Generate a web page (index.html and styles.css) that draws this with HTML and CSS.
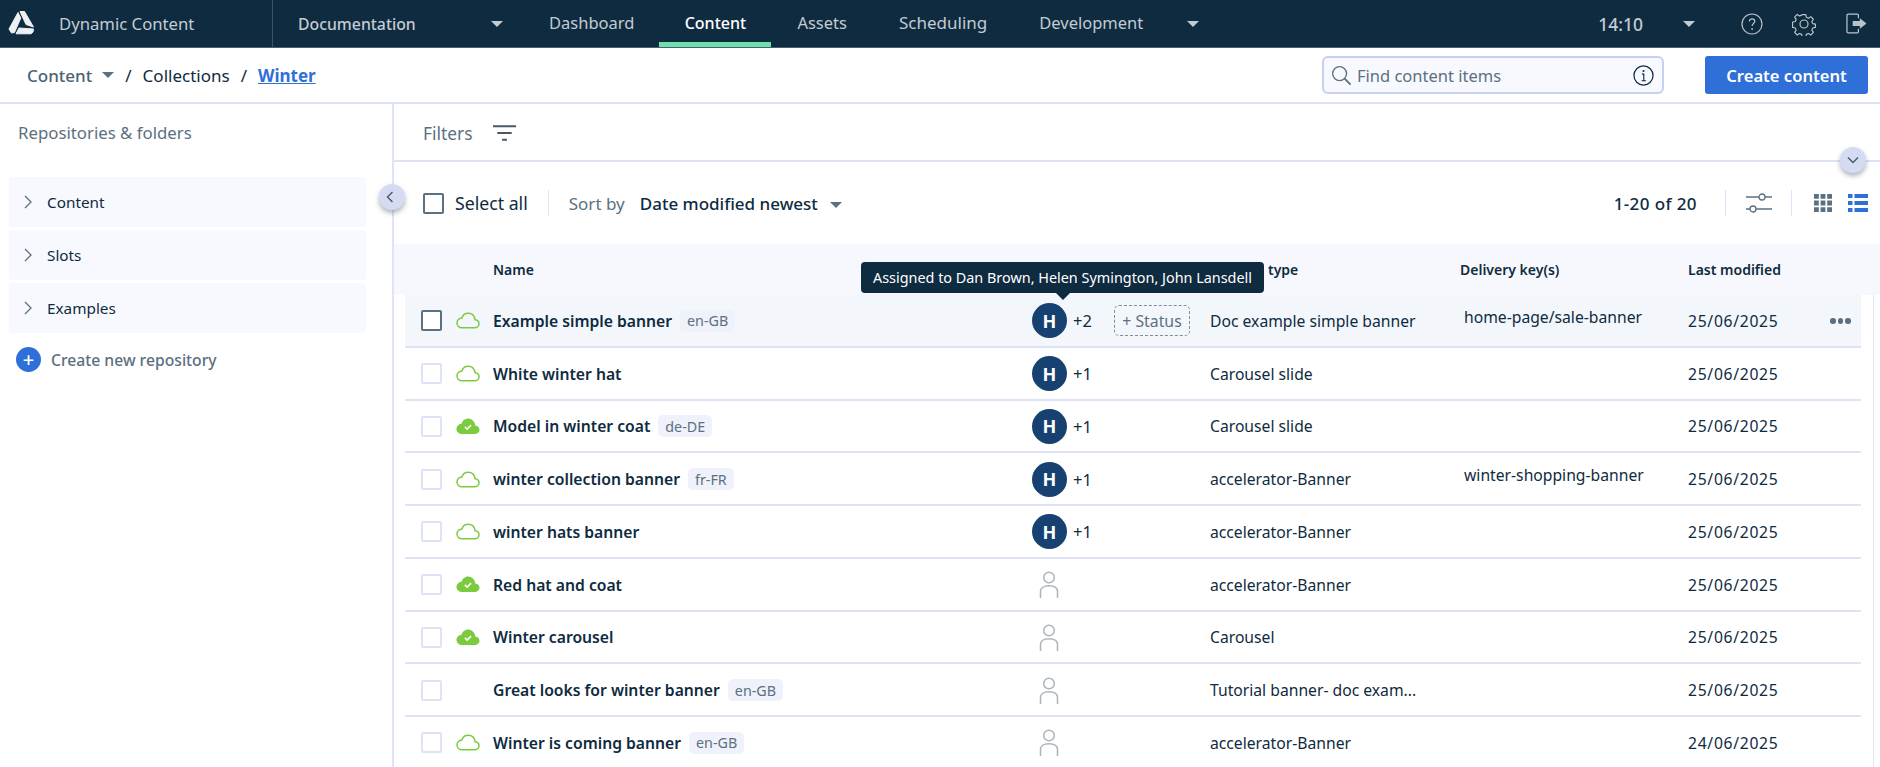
FILE: index.html
```html
<!DOCTYPE html>
<html lang="en">
<head>
<meta charset="utf-8">
<title>Dynamic Content</title>
<link rel="stylesheet" href="styles.css">
</head>
<body>
<svg class="sprite" aria-hidden="true">
  <symbol id="cloud" viewBox="0 0 24 17"><path d="M6 15.800h12.600c2.400 0 4.400-1.700 4.400-4 0-2.200-1.700-3.800-3.900-4C18.500 3.900 15.800 1.200 12.300 1.200 9.200 1.200 6.700 3.300 5.900 6 3.100 6.200 1 8.400 1 11c0 2.700 2.200 4.800 5 4.800z" fill="none" stroke="#7ccb3f" stroke-width="1.500"/></symbol>
  <symbol id="cloud-ok" viewBox="0 0 24 17"><path d="M6 16h12.600c2.500 0 4.900-1.700 4.900-4.200 0-2.300-1.900-4-4.100-4.200C18.700 3.500 15.800.5 12.300.5 9 .5 6.300 2.800 5.500 5.700 2.700 6 .5 8.300.5 11c0 2.800 2.400 5 5.500 5z" fill="#7ccb3f"/><path d="M8.800 8.800l2.300 2.300 4-4" fill="none" stroke="#fff" stroke-width="1.500"/></symbol>
  <symbol id="person" viewBox="0 0 20 28"><circle cx="10" cy="6.500" r="5.300" fill="none" stroke="#a9b5bd" stroke-width="1.500"/><path d="M1.500 27v-6.500c0-3.600 3-5.800 8.500-5.800s8.500 2.200 8.500 5.800V27" fill="none" stroke="#a9b5bd" stroke-width="1.500"/></symbol>
</svg>

<header class="topbar">
  <div class="brand">
    <svg class="logo" viewBox="0 0 26 24"><g fill="#eef1f3" stroke="#eef1f3" stroke-width="1" stroke-linejoin="round"><path d="M10 1.500L12.800 7 6.500 21.500 3.500 22 1 18z"/><path d="M12 .5h4.500L25.500 16 18 13.500z"/><path d="M8 22.800L11 17l14.500 1-.5 3-2 1.800z"/></g></svg>
    <span>Dynamic Content</span>
  </div>
  <div class="hub"><span>Documentation</span><i class="caret caret-light"></i></div>
  <nav class="tabs">
    <a class="tab">Dashboard</a>
    <a class="tab tab-active">Content</a>
    <a class="tab">Assets</a>
    <a class="tab tab-wide">Scheduling</a>
    <a class="tab">Development</a>
    <i class="caret caret-light"></i>
  </nav>
  <div class="top-right">
    <span class="clock">14:10</span>
    <i class="caret caret-light"></i>
    <svg class="top-icon icon-help" viewBox="0 0 22 22"><circle cx="11" cy="11" r="10" fill="none" stroke="#b9c3ca" stroke-width="1.200"/><path d="M8.400 8.500c0-1.600 1.200-2.700 2.700-2.700s2.700 1 2.700 2.500c0 2.200-2.700 2.300-2.700 4.600" fill="none" stroke="#b9c3ca" stroke-width="1.200"/><circle cx="11.100" cy="16" r=".9" fill="#b9c3ca"/></svg>
    <svg class="top-icon icon-gear" viewBox="0 0 24 24"><path d="M10 1.500h4l.6 3 2.400 1 2.600-1.700 2.800 2.900-1.700 2.500 1 2.400 3 .6v3.600l-3 .6-1 2.400 1.700 2.500-2.800 2.900-2.600-1.700-2.400 1-.6 3h-4l-.6-3-2.400-1-2.600 1.700-2.800-2.900 1.700-2.500-1-2.400-3-.6V9.800l3-.6 1-2.400-1.700-2.500 2.800-2.900L7 3.100l2.400-1z" transform="translate(1.200 1.200) scale(.9)" fill="none" stroke="#b9c3ca" stroke-width="1.300" stroke-linejoin="round"/><circle cx="12" cy="12" r="4" fill="none" stroke="#b9c3ca" stroke-width="1.200"/></svg>
    <svg class="top-icon icon-exit" viewBox="0 0 22 22"><path d="M13 5.500V2.500c0-.8-.6-1.300-1.300-1.300H2.300C1.600 1.200 1 1.700 1 2.500v17c0 .8.600 1.300 1.300 1.300h9.400c.7 0 1.300-.5 1.300-1.300v-3" fill="none" stroke="#b9c3ca" stroke-width="1.300"/><path d="M7 8.500h7.500V5.500l7 5.500-7 5.500v-3H7z" fill="#b9c3ca"/></svg>
  </div>
</header>

<div class="subbar">
  <div class="crumbs">
    <span class="crumb-muted">Content</span>
    <i class="caret caret-grey"></i>
    <span class="slash">/</span>
    <span>Collections</span>
    <span class="slash">/</span>
    <a class="crumb-link">Winter</a>
  </div>
  <div class="actions">
    <div class="search">
      <svg class="search-icon" viewBox="0 0 22 22"><circle cx="9" cy="9" r="7.300" fill="none" stroke="#5b7080" stroke-width="1.400"/><path d="M14.300 14.300l6.200 6.200" stroke="#5b7080" stroke-width="2"/></svg>
      <span class="search-text">Find content items</span>
      <svg class="info-icon" viewBox="0 0 22 22"><circle cx="11" cy="11" r="10" fill="none" stroke="#0f2b40" stroke-width="1.300"/><circle cx="11" cy="6.300" r="1.100" fill="#0f2b40"/><path d="M9.300 9.500h2v7M9 16.500h4.500" fill="none" stroke="#0f2b40" stroke-width="1.200"/></svg>
    </div>
    <button class="create">Create content</button>
  </div>
</div>

<div class="main">
  <aside class="sidebar">
    <div class="side-title">Repositories &amp; folders</div>
    <ul class="repos">
      <li class="repo"><svg class="chev" viewBox="0 0 8 14"><path d="M1 1l6 6-6 6" fill="none" stroke="#5b7080" stroke-width="1.300"/></svg>Content</li>
      <li class="repo"><svg class="chev" viewBox="0 0 8 14"><path d="M1 1l6 6-6 6" fill="none" stroke="#5b7080" stroke-width="1.300"/></svg>Slots</li>
      <li class="repo"><svg class="chev" viewBox="0 0 8 14"><path d="M1 1l6 6-6 6" fill="none" stroke="#5b7080" stroke-width="1.300"/></svg>Examples</li>
    </ul>
    <div class="new-repo"><span class="plus">+</span>Create new repository</div>
    <button class="round-btn collapse"><svg viewBox="0 0 8 12" class="round-icon-v"><path d="M6.500 1L1.500 6l5 5" fill="none" stroke="#44596a" stroke-width="1.400"/></svg></button>
  </aside>

  <section class="content">
    <div class="filters">
      <span>Filters</span>
      <svg class="filter-icon" viewBox="0 0 24 16"><path d="M0 1h24M4.500 8h15M9.500 15h5" stroke="#44596a" stroke-width="2"/></svg>
      <button class="round-btn expand"><svg viewBox="0 0 12 8" class="round-icon-h"><path d="M1 1.500l5 5 5-5" fill="none" stroke="#44596a" stroke-width="1.400"/></svg></button>
    </div>

    <div class="toolbar">
      <span class="box box-dark"></span>
      <span class="select-all">Select all</span>
      <span class="vr vr-sort"></span>
      <span class="sort-label">Sort by</span>
      <span class="sort-value">Date modified newest</span>
      <i class="caret caret-grey"></i>
      <span class="spacer"></span>
      <span class="count">1-20 of 20</span>
      <span class="vr vr-count"></span>
      <svg class="sliders" viewBox="0 0 26 20"><path d="M0 4h13M19 4h7M0 16h4M10 16h16" stroke="#5b7080" stroke-width="1.300"/><circle cx="16" cy="4" r="3" fill="none" stroke="#5b7080" stroke-width="1.300"/><circle cx="7" cy="16" r="3" fill="none" stroke="#5b7080" stroke-width="1.300"/></svg>
      <span class="vr vr-view"></span>
      <svg class="view-grid" viewBox="0 0 18 18"><path fill="#5b7080" d="M0 0h4.800v4.800H0zM6.600 0h4.800v4.800H6.600zM13.200 0H18v4.800h-4.800zM0 6.600h4.800v4.800H0zM6.600 6.600h4.800v4.800H6.600zM13.200 6.600H18v4.800h-4.800zM0 13.200h4.800V18H0zM6.600 13.200h4.800V18H6.600zM13.200 13.200H18V18h-4.800z"/></svg>
      <svg class="view-list" viewBox="0 0 20 18"><path fill="#2f6fd8" d="M0 0h4.500v4H0zM6.500 0H20v4H6.500zM0 7h4.500v4H0zM6.500 7H20v4H6.500zM0 14h4.500v4H0zM6.500 14H20v4H6.500z"/></svg>
    </div>

    <div class="thead">
      <span class="th th-name">Name</span>
      <span class="th th-type">type</span>
      <span class="th th-key">Delivery key(s)</span>
      <span class="th th-date">Last modified</span>
      <div class="tooltip">Assigned to Dan Brown, Helen Symington, John Lansdell</div>
    </div>

    <div class="rows">
      <div class="row row-hover">
        <span class="box box-dark"></span>
        <svg class="cloud"><use href="#cloud"/></svg>
        <div class="name"><b>Example simple banner</b><span class="tag">en-GB</span></div>
        <div class="assignee"><span class="avatar">H</span><span class="more">+2</span></div>
        <div class="status"><span class="status-btn">+ Status</span></div>
        <div class="ctype">Doc example simple banner</div>
        <div class="key">home-page/sale-banner</div>
        <div class="date">25/06/2025</div>
        <div class="dots"><i></i><i></i><i></i></div>
      </div>
      <div class="row">
        <span class="box"></span>
        <svg class="cloud"><use href="#cloud"/></svg>
        <div class="name"><b>White winter hat</b></div>
        <div class="assignee"><span class="avatar">H</span><span class="more">+1</span></div>
        <div class="status"></div>
        <div class="ctype">Carousel slide</div>
        <div class="key"></div>
        <div class="date">25/06/2025</div>
      </div>
      <div class="row">
        <span class="box"></span>
        <svg class="cloud"><use href="#cloud-ok"/></svg>
        <div class="name"><b>Model in winter coat</b><span class="tag">de-DE</span></div>
        <div class="assignee"><span class="avatar">H</span><span class="more">+1</span></div>
        <div class="status"></div>
        <div class="ctype">Carousel slide</div>
        <div class="key"></div>
        <div class="date">25/06/2025</div>
      </div>
      <div class="row">
        <span class="box"></span>
        <svg class="cloud"><use href="#cloud"/></svg>
        <div class="name"><b>winter collection banner</b><span class="tag">fr-FR</span></div>
        <div class="assignee"><span class="avatar">H</span><span class="more">+1</span></div>
        <div class="status"></div>
        <div class="ctype">accelerator-Banner</div>
        <div class="key">winter-shopping-banner</div>
        <div class="date">25/06/2025</div>
      </div>
      <div class="row">
        <span class="box"></span>
        <svg class="cloud"><use href="#cloud"/></svg>
        <div class="name"><b>winter hats banner</b></div>
        <div class="assignee"><span class="avatar">H</span><span class="more">+1</span></div>
        <div class="status"></div>
        <div class="ctype">accelerator-Banner</div>
        <div class="key"></div>
        <div class="date">25/06/2025</div>
      </div>
      <div class="row">
        <span class="box"></span>
        <svg class="cloud"><use href="#cloud-ok"/></svg>
        <div class="name"><b>Red hat and coat</b></div>
        <div class="assignee"><svg class="person"><use href="#person"/></svg></div>
        <div class="status"></div>
        <div class="ctype">accelerator-Banner</div>
        <div class="key"></div>
        <div class="date">25/06/2025</div>
      </div>
      <div class="row">
        <span class="box"></span>
        <svg class="cloud"><use href="#cloud-ok"/></svg>
        <div class="name"><b>Winter carousel</b></div>
        <div class="assignee"><svg class="person"><use href="#person"/></svg></div>
        <div class="status"></div>
        <div class="ctype">Carousel</div>
        <div class="key"></div>
        <div class="date">25/06/2025</div>
      </div>
      <div class="row">
        <span class="box"></span>
        <span class="cloud"></span>
        <div class="name"><b>Great looks for winter banner</b><span class="tag">en-GB</span></div>
        <div class="assignee"><svg class="person"><use href="#person"/></svg></div>
        <div class="status"></div>
        <div class="ctype">Tutorial banner- doc exam...</div>
        <div class="key"></div>
        <div class="date">25/06/2025</div>
      </div>
      <div class="row">
        <span class="box"></span>
        <svg class="cloud"><use href="#cloud"/></svg>
        <div class="name"><b>Winter is coming banner</b><span class="tag">en-GB</span></div>
        <div class="assignee"><svg class="person"><use href="#person"/></svg></div>
        <div class="status"></div>
        <div class="ctype">accelerator-Banner</div>
        <div class="key"></div>
        <div class="date">24/06/2025</div>
      </div>
    </div>
  </section>
</div>
</body>
</html>
```

FILE: styles.css
```css
* { box-sizing: border-box; }
html, body { margin: 0; height: 100%; }
body {
  height: 767px;
  overflow: hidden;
  display: flex;
  flex-direction: column;
  background: #fff;
  color: #0f2b40;
  font-family: "Noto Sans", "Open Sans", sans-serif;
  font-size: 16.500px;
}
.sprite { display: none; }
button { font: inherit; border: 0; padding: 0; }
ul { list-style: none; margin: 0; padding: 0; }

.caret { display: block; width: 0; height: 0; border-style: solid; border-width: 6px 6.500px 0; border-color: transparent; flex: none; }
.caret-light { border-top-color: #c2ccd3; }
.caret-grey { border-top-color: #5b7080; }

.topbar {
  height: 48px;
  flex: none;
  display: flex;
  align-items: center;
  background: #0f2b40;
  border-bottom: 1px solid #4a5f6f;
  color: #c2ccd3;
}
.brand { width: 273px; height: 100%; flex: none; display: flex; align-items: center; padding-left: 8px; gap: 25px; border-right: 1px solid #3d5466; font-size: 16.700px; }
.logo { width: 26px; height: 24px; flex: none; margin-bottom: 1px; }
.hub { width: 255px; flex: none; display: flex; align-items: center; justify-content: space-between; padding: 0 25px; font-weight: 500; font-size: 15.800px; }
.tabs { display: flex; align-items: center; height: 100%; margin-left: 21px; }
.tab { height: 100%; padding: 0 26px; line-height: 46px; white-space: nowrap; }
.tabs .tab:first-child { padding: 0 25px 0 26px; margin-left: -26px; }
.tab-active { width: 112px; text-align: center; padding: 0; color: #fff; font-weight: 500; font-size: 16px; border-bottom: 5px solid #6ee0b0; }
.tab-wide { font-size: 17px; }
.tabs .caret { margin-left: 18px; }
.top-right { margin-left: auto; display: flex; align-items: center; padding-right: 13px; }
.clock { font-weight: 500; font-size: 17.500px; margin-right: 40px; }
.top-icon { display: block; flex: none; }
.icon-help { width: 22px; height: 22px; margin-left: 46px; }
.icon-gear { width: 24px; height: 24px; margin-left: 29px; }
.icon-exit { width: 21px; height: 21px; margin-left: 30px; }

.subbar {
  height: 56px;
  flex: none;
  display: flex;
  align-items: center;
  justify-content: space-between;
  border-bottom: 2px solid #dfe3f7;
  padding: 0 12px 0 27px;
}
.crumbs { display: flex; align-items: center; gap: 10px; font-size: 17px; }
.crumb-muted { color: #4c6374; font-weight: 500; }
.slash { margin: 0 1px; }
.crumb-link { color: #2f6fd8; font-weight: 700; text-decoration: underline; }
.actions { display: flex; align-items: center; gap: 41px; }
.search { width: 342px; height: 38px; display: flex; align-items: center; background: #f8f9fe; border: 2px solid #c5d0f2; border-radius: 6px; padding: 0 8px 0 7px; }
.search-icon { width: 21px; height: 21px; flex: none; }
.search-text { margin-left: 5px; color: #5b7080; }
.info-icon { width: 21px; height: 21px; flex: none; margin-left: auto; }
.create { width: 163px; height: 38px; background: #2f6fd8; color: #fff; border-radius: 3px; font-weight: 600; font-size: 16.600px; }

.main { flex: 1; min-height: 0; display: flex; }
.sidebar { position: relative; width: 394px; flex: none; border-right: 2px solid #dfe3f7; }
.side-title { padding: 18px 0 0 18px; line-height: 22px; color: #5b7080; height: 73px; font-size: 16.800px; }
.repos { display: flex; flex-direction: column; gap: 3px; padding: 0 26px 0 9px; }
.repo { height: 50px; display: flex; align-items: center; gap: 15px; padding-left: 15px; background: #f8f9fe; border-radius: 3px; font-size: 15.300px; }
.chev { width: 8px; height: 14px; flex: none; }
.new-repo { display: flex; align-items: center; gap: 10px; padding: 14px 0 0 16px; color: #5b7080; font-weight: 500; font-size: 15.700px; }
.plus { width: 25px; height: 25px; border-radius: 50%; background: #2f6fd8; color: #fff; display: flex; align-items: center; justify-content: center; font-size: 20px; line-height: 1; }

.round-btn { position: absolute; z-index: 2; width: 26px; height: 26px; border-radius: 50%; background: #d5dbf3; box-shadow: 0 3px 5px rgba(15, 43, 64, .35); display: flex; align-items: center; justify-content: center; }
.collapse { top: 80px; right: -13px; padding-right: 4px; }
.expand { top: 43px; right: 14px; }
.round-icon-v { width: 8px; height: 12px; }
.round-icon-h { width: 12px; height: 8px; }

.content { flex: 1; min-width: 0; display: flex; flex-direction: column; }
.filters { position: relative; height: 58px; flex: none; display: flex; align-items: center; gap: 20px; padding: 1px 0 0 29px; border-bottom: 2px solid #dfe3f7; color: #5b7080; font-size: 17.400px; }
.filter-icon { width: 23px; height: 16px; }
.toolbar { height: 82px; flex: none; display: flex; align-items: center; padding: 0 12px 0 29px; font-size: 17px; }
.box { display: block; width: 21px; height: 21px; flex: none; border: 2px solid #dfe3f7; border-radius: 2px; background: #fff; }
.box-dark { border-color: #5b7080; }
.select-all { margin-left: 11px; font-size: 17.700px; }
.vr { width: 1px; height: 26px; background: #dfe3f7; flex: none; }
.vr-sort { margin-left: 20px; }
.sort-label { margin-left: 20px; color: #5b7080; }
.sort-value { margin-left: 15px; font-weight: 500; }
.toolbar .caret { margin-left: 12px; margin-top: 3px; }
.spacer { flex: 1; }
.count { font-weight: 500; letter-spacing: .4px; }
.vr-count { margin-left: 28px; }
.sliders { width: 26px; height: 20px; margin-left: 20px; flex: none; }
.vr-view { margin-left: 19px; }
.view-grid { width: 18px; height: 18px; margin-left: 22px; flex: none; }
.view-list { width: 20px; height: 18px; margin-left: 16px; flex: none; }

.thead { position: relative; height: 51px; flex: none; background: #f7f8fd; display: grid; grid-template-columns: 873px 193px 228px 1fr; align-items: center; font-size: 14px; font-weight: 600; }
.th-name { padding-left: 99px; }
.th-type { grid-column: 2; padding-left: 1px; }
.th-key { grid-column: 3; }
.tooltip { position: absolute; left: 467px; top: 18px; height: 31px; width: 403px; background: #0f2b40; color: #fff; border-radius: 4px; font-size: 14.400px; font-weight: 400; display: flex; align-items: center; justify-content: center; white-space: nowrap; z-index: 3; }
.tooltip::after { content: ""; position: absolute; left: 194px; top: 30px; border-style: solid; border-width: 8px 8px 0; border-color: #0f2b40 transparent transparent; }

.rows { flex: 1; padding: 0 19px 0 11px; background: linear-gradient(#e3e6ea, #e3e6ea) no-repeat calc(100% - 6px) 0 / 1px 100%; }
.row { height: 52.750px; padding-top: 1px; display: grid; grid-template-columns: 16px 35px 37px 539px 82px 96px 254px 224px 142px 1fr; align-items: center; border-bottom: 2px solid #dfe3f7; font-size: 15.700px; }
.row .box { grid-column: 2; }
.row-hover { background: #f3f7fc; }
.cloud { display: block; width: 24px; height: 17px; }
.name { display: flex; align-items: center; gap: 8px; white-space: nowrap; }
.name b { font-weight: 600; }
.tag { height: 22px; padding: 0 7px; display: flex; align-items: center; background: #eff1fb; border-radius: 5px; color: #5b7080; font-size: 14.300px; }
.assignee { display: flex; align-items: center; gap: 6px; }
.more { font-size: 16.500px; }
.avatar { width: 35px; height: 35px; flex: none; border-radius: 50%; background: #174170; color: #fff; display: flex; align-items: center; justify-content: center; font-size: 18px; font-weight: 700; }
.person { display: block; width: 20px; height: 28px; margin: 1px 0 0 7px; }
.status-btn { display: inline-flex; align-items: center; justify-content: center; width: 76px; height: 31px; border: 1.500px dashed #7d8d99; border-radius: 5px; color: #5b7080; font-size: 15.800px; }
.key { margin-top: -8px; }
.date { letter-spacing: .7px; }
.dots { display: flex; gap: 2px; }
.dots i { display: block; width: 5.500px; height: 5.500px; border-radius: 50%; background: #5b7080; }
```
